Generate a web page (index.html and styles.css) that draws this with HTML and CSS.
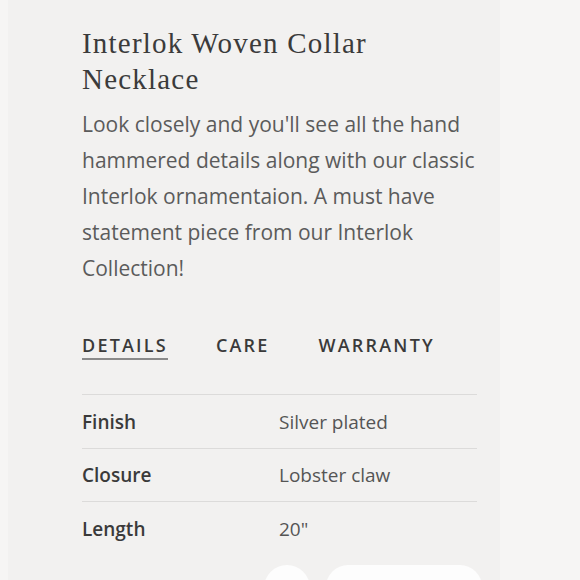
FILE: index.html
```html
<!DOCTYPE html>
<html>
<head>
<meta charset="utf-8">
<link rel="stylesheet" href="styles.css">
</head>
<body>
<main class="panel">
  <h1 class="title">Interlok Woven Collar Necklace</h1>
  <p class="desc">Look closely and you'll see all the hand hammered details along with our classic Interlok ornamentaion. A must have statement piece from our Interlok Collection!</p>
  <nav class="tabs">
    <span class="tab active">DETAILS</span>
    <span class="tab">CARE</span>
    <span class="tab">WARRANTY</span>
  </nav>
  <div class="specs">
    <div class="row"><span class="label">Finish</span><span class="value">Silver plated</span></div>
    <div class="row"><span class="label">Closure</span><span class="value">Lobster claw</span></div>
    <div class="row"><span class="label">Length</span><span class="value">20"</span></div>
  </div>
</main>
<div class="fab round"></div>
<div class="fab pill"></div>
</body>
</html>
```
FILE: styles.css
```css
html, body {
  margin: 0;
  padding: 0;
  height: 580px;
  overflow: hidden;
  background: #f6f5f4;
}
.panel {
  margin-left: 8px;
  width: 492px;
  height: 580px;
  overflow: hidden;
  background: #f2f1f0;
  padding: 25px 0 0 74px;
  box-sizing: border-box;
}
.title {
  margin: 0;
  width: 320px;
  font-family: "Liberation Serif", serif;
  font-weight: normal;
  font-size: 29px;
  letter-spacing: 1.2px;
  line-height: 36px;
  color: #3b3b3b;
}
.desc {
  margin: 9px 0 0;
  width: 405px;
  font-family: "Open Sans", sans-serif;
  font-size: 21px;
  line-height: 36px;
  color: #5b5b5b;
}
.tabs {
  display: flex;
  margin-top: 48px;
  font-family: "Open Sans", sans-serif;
  font-weight: 600;
  font-size: 18px;
  letter-spacing: 2.2px;
  color: #3a3a3a;
}
.tab {
  padding-bottom: 2px;
  line-height: 22px;
}
.tab:nth-child(1) { margin-right: 48px; }
.tab:nth-child(2) { margin-right: 49px; }
.tab.active {
  border-bottom: 2px solid #8a8a8a;
}
.specs {
  margin-top: 34px;
  width: 395px;
  font-family: "Open Sans", sans-serif;
  font-size: 19px;
}
.row {
  display: flex;
  border-top: 1px solid #dcdbda;
  height: 54px;
  box-sizing: border-box;
  align-items: center;
}
.row:nth-child(2) { height: 53px; }
.label {
  width: 197px;
  font-weight: 600;
  color: #3a3a3a;
}
.value {
  color: #555;
}
.fab {
  position: absolute;
  background: #fdfdfd;
  top: 565px;
}
.fab.round {
  left: 264px;
  width: 46px;
  height: 46px;
  border-radius: 50%;
}
.fab.pill {
  left: 326px;
  width: 156px;
  height: 50px;
  border-radius: 22px;
}
```
